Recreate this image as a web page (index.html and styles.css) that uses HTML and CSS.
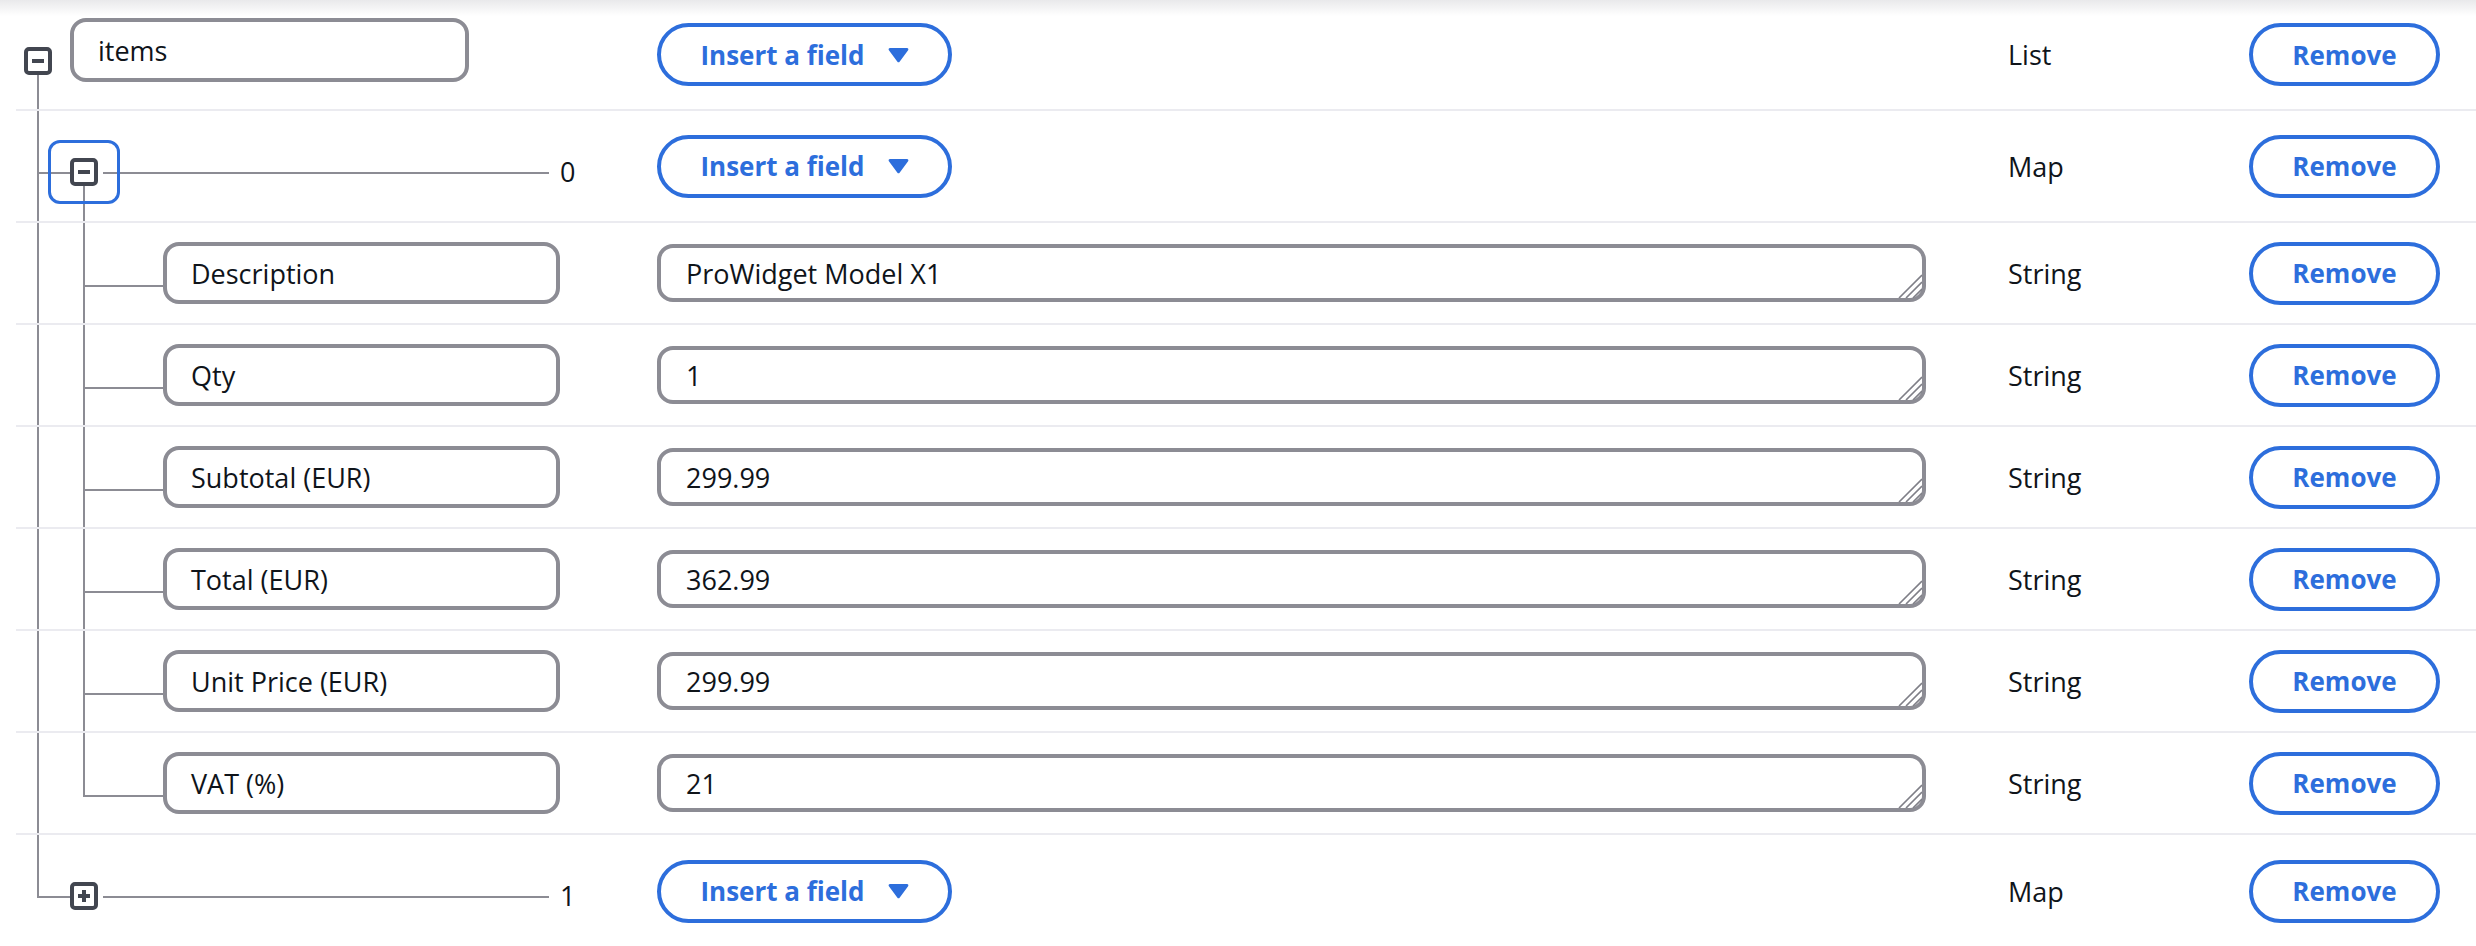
FILE: index.html
```html
<!DOCTYPE html>
<html lang="en">
<head>
<meta charset="utf-8">
<title>Attribute editor</title>
<link rel="stylesheet" href="styles.css">
</head>
<body>
<div class="editor">

  <div class="row row-root">
    <div class="tree tree-root">
      <span class="toggle toggle-root"><svg width="28" height="28" viewBox="0 0 28 28"><rect x="2" y="2" width="24" height="24" rx="3" fill="#fff" stroke="#424650" stroke-width="4"/><rect x="8" y="12" width="12" height="4" fill="#424650"/></svg></span>
      <div class="field key-root">items</div>
    </div>
    <div class="value"><button class="btn btn-insert"><span>Insert a field</span><svg class="caret" width="21" height="16" viewBox="0 0 21 16"><path d="M2 1h17c1.2 0 1.8 1.3 1.1 2.2l-8.5 11.6c-.5.7-1.7.7-2.2 0L.9 3.2C.2 2.3.8 1 2 1z" fill="currentColor"/></svg></button></div>
    <div class="type">List</div>
    <div class="action"><button class="btn btn-remove">Remove</button></div>
  </div>

  <div class="row row-head">
    <div class="tree tree-open">
      <span class="focus-ring"><span class="toggle"><svg width="28" height="28" viewBox="0 0 28 28"><rect x="2" y="2" width="24" height="24" rx="3" fill="#fff" stroke="#424650" stroke-width="4"/><rect x="8" y="12" width="12" height="4" fill="#424650"/></svg></span></span>
      <span class="index index-open">0</span>
    </div>
    <div class="value"><button class="btn btn-insert"><span>Insert a field</span><svg class="caret" width="21" height="16" viewBox="0 0 21 16"><path d="M2 1h17c1.2 0 1.8 1.3 1.1 2.2l-8.5 11.6c-.5.7-1.7.7-2.2 0L.9 3.2C.2 2.3.8 1 2 1z" fill="currentColor"/></svg></button></div>
    <div class="type">Map</div>
    <div class="action"><button class="btn btn-remove">Remove</button></div>
  </div>

  <div class="row row-leaf">
    <div class="tree tree-leaf"><div class="field key">Description</div></div>
    <div class="value"><div class="field text">ProWidget Model X1<svg class="grip" width="24" height="24" viewBox="0 0 24 24"><path d="M24 1 1 24M24 8 8 24M24 15 15 24" stroke="#7f7f87" stroke-width="1.6" fill="none"/></svg></div></div>
    <div class="type">String</div>
    <div class="action"><button class="btn btn-remove">Remove</button></div>
  </div>

  <div class="row row-leaf">
    <div class="tree tree-leaf"><div class="field key">Qty</div></div>
    <div class="value"><div class="field text">1<svg class="grip" width="24" height="24" viewBox="0 0 24 24"><path d="M24 1 1 24M24 8 8 24M24 15 15 24" stroke="#7f7f87" stroke-width="1.6" fill="none"/></svg></div></div>
    <div class="type">String</div>
    <div class="action"><button class="btn btn-remove">Remove</button></div>
  </div>

  <div class="row row-leaf">
    <div class="tree tree-leaf"><div class="field key">Subtotal (EUR)</div></div>
    <div class="value"><div class="field text">299.99<svg class="grip" width="24" height="24" viewBox="0 0 24 24"><path d="M24 1 1 24M24 8 8 24M24 15 15 24" stroke="#7f7f87" stroke-width="1.6" fill="none"/></svg></div></div>
    <div class="type">String</div>
    <div class="action"><button class="btn btn-remove">Remove</button></div>
  </div>

  <div class="row row-leaf">
    <div class="tree tree-leaf"><div class="field key">Total (EUR)</div></div>
    <div class="value"><div class="field text">362.99<svg class="grip" width="24" height="24" viewBox="0 0 24 24"><path d="M24 1 1 24M24 8 8 24M24 15 15 24" stroke="#7f7f87" stroke-width="1.6" fill="none"/></svg></div></div>
    <div class="type">String</div>
    <div class="action"><button class="btn btn-remove">Remove</button></div>
  </div>

  <div class="row row-leaf">
    <div class="tree tree-leaf"><div class="field key">Unit Price (EUR)</div></div>
    <div class="value"><div class="field text">299.99<svg class="grip" width="24" height="24" viewBox="0 0 24 24"><path d="M24 1 1 24M24 8 8 24M24 15 15 24" stroke="#7f7f87" stroke-width="1.6" fill="none"/></svg></div></div>
    <div class="type">String</div>
    <div class="action"><button class="btn btn-remove">Remove</button></div>
  </div>

  <div class="row row-leaf">
    <div class="tree tree-leaf tree-leaf-last"><div class="field key">VAT (%)</div></div>
    <div class="value"><div class="field text">21<svg class="grip" width="24" height="24" viewBox="0 0 24 24"><path d="M24 1 1 24M24 8 8 24M24 15 15 24" stroke="#7f7f87" stroke-width="1.6" fill="none"/></svg></div></div>
    <div class="type">String</div>
    <div class="action"><button class="btn btn-remove">Remove</button></div>
  </div>

  <div class="row row-head row-last">
    <div class="tree tree-closed">
      <span class="toggle toggle-closed"><svg width="28" height="28" viewBox="0 0 28 28"><rect x="2" y="2" width="24" height="24" rx="3" fill="#fff" stroke="#424650" stroke-width="4"/><rect x="8" y="12" width="12" height="4" fill="#424650"/><rect x="12" y="8" width="4" height="12" fill="#424650"/></svg></span>
      <span class="index index-closed">1</span>
    </div>
    <div class="value"><button class="btn btn-insert"><span>Insert a field</span><svg class="caret" width="21" height="16" viewBox="0 0 21 16"><path d="M2 1h17c1.2 0 1.8 1.3 1.1 2.2l-8.5 11.6c-.5.7-1.7.7-2.2 0L.9 3.2C.2 2.3.8 1 2 1z" fill="currentColor"/></svg></button></div>
    <div class="type">Map</div>
    <div class="action"><button class="btn btn-remove">Remove</button></div>
  </div>

</div>
</body>
</html>
```

FILE: styles.css
```css
:root {
  --blue: #2d6edc;
  --text: #0f141a;
  --border: #8c8c94;
  --sep: #ebebf0;
  --line: #8c8c94;
}

* { box-sizing: border-box; }

html, body { margin: 0; }

body {
  background: #fff linear-gradient(#e9e9eb, #fff 16px) no-repeat;
  font-family: "Open Sans", "Noto Sans", sans-serif;
  font-size: 27px;
  color: var(--text);
  min-height: 946px;
}

.editor {
  padding-left: 16px;
}

.row {
  display: grid;
  grid-template-columns: 641px 1269px 323px 191px;
  align-items: center;
  height: 102px;
  border-bottom: 2px solid var(--sep);
}

.row-head { height: 112px; }
.row-root { height: 111px; }
.row-last { border-bottom: 0; }

/* ---------- tree column ---------- */
.tree {
  align-self: stretch;
  display: flex;
  align-items: flex-start;
  background-repeat: no-repeat;
}

.tree-root {
  background-image: linear-gradient(var(--line), var(--line));
  background-position: 21px 75px;
  background-size: 2px calc(100% - 75px);
}

.tree-open {
  background-image:
    linear-gradient(var(--line), var(--line)),
    linear-gradient(var(--line), var(--line)),
    linear-gradient(var(--line), var(--line)),
    linear-gradient(var(--line), var(--line));
  background-position: 21px 0, 21px 61px, 87px 61px, 67px 75px;
  background-size: 2px 100%, 33px 2px, 446px 2px, 2px calc(100% - 75px);
}

.tree-leaf {
  align-items: center;
  background-image:
    linear-gradient(var(--line), var(--line)),
    linear-gradient(var(--line), var(--line)),
    linear-gradient(var(--line), var(--line));
  background-position: 21px 0, 67px 0, 67px 62px;
  background-size: 2px 100%, 2px 100%, 80px 2px;
}

.tree-leaf-last {
  background-size: 2px 100%, 2px 64px, 80px 2px;
}

.tree-closed {
  background-image:
    linear-gradient(var(--line), var(--line)),
    linear-gradient(var(--line), var(--line)),
    linear-gradient(var(--line), var(--line));
  background-position: 21px 0, 21px 61px, 87px 61px;
  background-size: 2px 63px, 33px 2px, 446px 2px;
}

.toggle {
  flex: none;
  display: block;
  width: 28px;
  height: 28px;
  margin-top: 47px;
}

.toggle svg { display: block; }

.toggle-root { margin-left: 8px; }
.toggle-closed { margin-left: 54px; }

.focus-ring {
  flex: none;
  display: block;
  margin: 29px 0 0 32px;
  padding: 15px 19px;
  border: 3px solid var(--blue);
  border-radius: 12px;
}

.focus-ring .toggle { margin-top: 0; }

.index {
  line-height: 36px;
  margin-top: 43px;
}

.index-open { margin-left: 440px; }
.index-closed { margin-left: 462px; }

/* ---------- fields ---------- */
.field {
  display: flex;
  align-items: center;
  background: #fff;
  border: 4px solid var(--border);
  border-radius: 16px;
  padding-left: 24px;
  white-space: nowrap;
  flex: none;
}

.key-root {
  width: 399px;
  height: 64px;
  margin: 18px 0 0 18px;
}

.key {
  width: 397px;
  height: 62px;
  margin-left: 147px;
}

.value {
  display: flex;
  align-items: center;
}

.text {
  position: relative;
  width: 1269px;
  height: 58px;
  padding-left: 25px;
}

.grip {
  position: absolute;
  right: 0;
  bottom: 0;
}

/* ---------- type + buttons ---------- */
.type {
  padding-left: 82px;
}

.btn {
  font: inherit;
  font-size: 26px;
  font-weight: 700;
  line-height: 1;
  color: var(--blue);
  background: #fff;
  border: 4px solid var(--blue);
  border-radius: 32px;
  height: 63px;
  display: flex;
  align-items: center;
  justify-content: center;
  padding: 0;
  cursor: pointer;
}

.btn-insert {
  width: 295px;
  gap: 23px;
}

.caret { display: block; flex: none; }

.btn-remove {
  width: 191px;
}
```
